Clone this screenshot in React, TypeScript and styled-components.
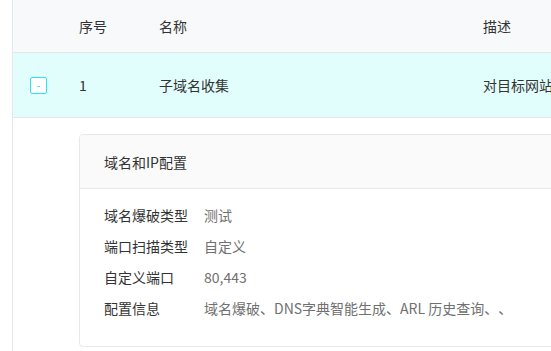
import styled, { createGlobalStyle } from "styled-components";

const GlobalStyle = createGlobalStyle`
 body {
  margin: 0;
  background: #fff;
  font-family: "Noto Sans CJK SC", "Liberation Sans", sans-serif;
  font-size: 14px;
  color: #333;
  text-spacing-trim: space-all;
 }
`;

const details = [
 { label: "域名爆破类型", value: "测试" },
 { label: "端口扫描类型", value: "自定义" },
 { label: "自定义端口", value: "80,443" },
 { label: "配置信息", value: "域名爆破、DNS字典智能生成、ARL 历史查询、、" },
];

const App = () => {
 return (
  <>
   <GlobalStyle />
   <TableWrap>
    <HeadRow>
     <Cell />
     <Cell>序号</Cell>
     <Cell>名称</Cell>
     <Cell>描述</Cell>
    </HeadRow>
    <BodyRow>
     <Cell>
      <ExpandButton>-</ExpandButton>
     </Cell>
     <Cell>1</Cell>
     <Cell>子域名收集</Cell>
     <Cell>对目标网站进行子域名收集</Cell>
    </BodyRow>
    <ExpandedArea>
     <Card>
      <CardHeader>域名和IP配置</CardHeader>
      <CardBody>
       {details.map((d) => (
        <DetailRow key={d.label}>
         <DetailLabel>{d.label}</DetailLabel>
         <DetailValue>{d.value}</DetailValue>
        </DetailRow>
       ))}
      </CardBody>
     </Card>
    </ExpandedArea>
   </TableWrap>
  </>
 );
};

export default App;

const TableWrap = styled.div`
 margin-left: 12px;
 width: 560px;
 height: 351px;
 border-left: 1px solid #e3e8eb;
 overflow: hidden;
`;

const HeadRow = styled.div`
 display: grid;
 grid-template-columns: 50px 80px 324px 1fr;
 align-items: center;
 height: 52px;
 background: #f8f9fa;
 border-bottom: 1px solid #e4e8ea;
 color: #333;
`;

const BodyRow = styled(HeadRow)`
 height: 64px;
 background: #e2fefc;
`;

const Cell = styled.div`
 padding-left: 16px;
 white-space: nowrap;
 overflow: hidden;
 line-height: 20px;
`;

const ExpandButton = styled.span`
 display: flex;
 align-items: center;
 justify-content: center;
 box-sizing: border-box;
 width: 17px;
 height: 17px;
 margin-left: 1px;
 border: 1px solid #2ee2ef;
 border-radius: 2px;
 background: #fff;
 color: #2ee2ef;
 font-size: 11px;
 line-height: 1;
`;

const ExpandedArea = styled.div`
 padding: 16px 0 0 66px;
`;

const Card = styled.div`
 width: 520px;
 border: 1px solid #e8e8e8;
 border-radius: 4px;
 overflow: hidden;
`;

const CardHeader = styled.div`
 height: 53px;
 display: flex;
 align-items: center;
 padding-left: 24px;
 background: #fafafa;
 border-bottom: 1px solid #e8e8e8;
 color: #333;
`;

const CardBody = styled.div`
 padding: 10px 24px 23px;
`;

const DetailRow = styled.div`
 display: flex;
 align-items: center;
 height: 31px;
 line-height: 20px;
`;

const DetailLabel = styled.span`
 width: 100px;
 color: #333;
`;

const DetailValue = styled.span`
 color: #707070;
 white-space: nowrap;
`;
